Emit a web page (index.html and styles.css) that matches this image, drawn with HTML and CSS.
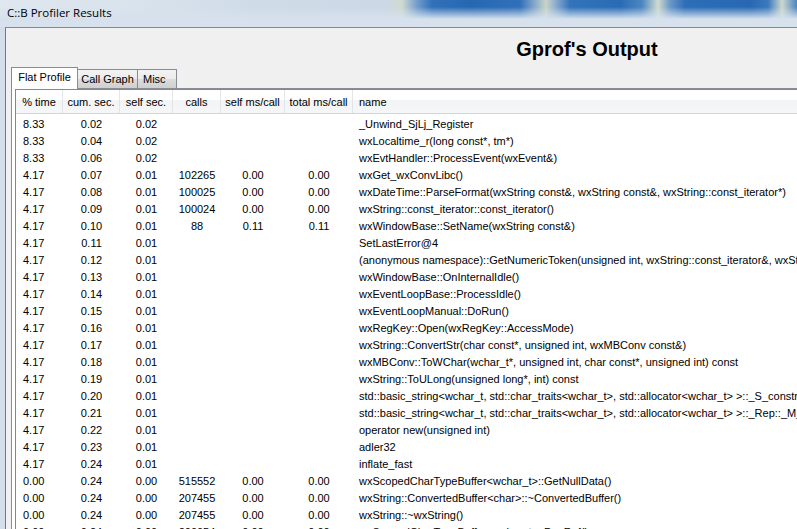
FILE: index.html
```html
<!DOCTYPE html>
<html>
<head>
<meta charset="utf-8">
<title>C::B Profiler Results</title>
<link rel="stylesheet" href="styles.css">
</head>
<body>
<div class="window">
  <div class="titlebar"><span class="caption">C::B Profiler Results</span></div>
  <div class="frame">
    <div class="client">
      <h1 class="heading">Gprof's Output</h1>
      <div class="notebook">
        <div class="tabs">
          <div class="tab active tab-flat">Flat Profile</div>
          <div class="tab tab-call">Call Graph</div>
          <div class="tab tab-misc">Misc</div>
        </div>
        <div class="page">
          <div class="list">
            <div class="header">
              <div class="hcell">% time</div>
              <div class="hcell">cum. sec.</div>
              <div class="hcell">self sec.</div>
              <div class="hcell">calls</div>
              <div class="hcell">self ms/call</div>
              <div class="hcell">total ms/call</div>
              <div class="hcell hname">name</div>
            </div>
            <div class="rows">
              <div class="row"><span class="c1">8.33</span><span>0.02</span><span>0.02</span><span></span><span></span><span></span><span class="cn">_Unwind_SjLj_Register</span></div>
              <div class="row"><span class="c1">8.33</span><span>0.04</span><span>0.02</span><span></span><span></span><span></span><span class="cn">wxLocaltime_r(long const*, tm*)</span></div>
              <div class="row"><span class="c1">8.33</span><span>0.06</span><span>0.02</span><span></span><span></span><span></span><span class="cn">wxEvtHandler::ProcessEvent(wxEvent&amp;)</span></div>
              <div class="row"><span class="c1">4.17</span><span>0.07</span><span>0.01</span><span>102265</span><span>0.00</span><span>0.00</span><span class="cn">wxGet_wxConvLibc()</span></div>
              <div class="row"><span class="c1">4.17</span><span>0.08</span><span>0.01</span><span>100025</span><span>0.00</span><span>0.00</span><span class="cn">wxDateTime::ParseFormat(wxString const&amp;, wxString const&amp;, wxString::const_iterator*)</span></div>
              <div class="row"><span class="c1">4.17</span><span>0.09</span><span>0.01</span><span>100024</span><span>0.00</span><span>0.00</span><span class="cn">wxString::const_iterator::const_iterator()</span></div>
              <div class="row"><span class="c1">4.17</span><span>0.10</span><span>0.01</span><span>88</span><span>0.11</span><span>0.11</span><span class="cn">wxWindowBase::SetName(wxString const&amp;)</span></div>
              <div class="row"><span class="c1">4.17</span><span>0.11</span><span>0.01</span><span></span><span></span><span></span><span class="cn">SetLastError@4</span></div>
              <div class="row"><span class="c1">4.17</span><span>0.12</span><span>0.01</span><span></span><span></span><span></span><span class="cn">(anonymous namespace)::GetNumericToken(unsigned int, wxString::const_iterator&amp;, wxString::const_iterator const&amp;, unsigned long*)</span></div>
              <div class="row"><span class="c1">4.17</span><span>0.13</span><span>0.01</span><span></span><span></span><span></span><span class="cn">wxWindowBase::OnInternalIdle()</span></div>
              <div class="row"><span class="c1">4.17</span><span>0.14</span><span>0.01</span><span></span><span></span><span></span><span class="cn">wxEventLoopBase::ProcessIdle()</span></div>
              <div class="row"><span class="c1">4.17</span><span>0.15</span><span>0.01</span><span></span><span></span><span></span><span class="cn">wxEventLoopManual::DoRun()</span></div>
              <div class="row"><span class="c1">4.17</span><span>0.16</span><span>0.01</span><span></span><span></span><span></span><span class="cn">wxRegKey::Open(wxRegKey::AccessMode)</span></div>
              <div class="row"><span class="c1">4.17</span><span>0.17</span><span>0.01</span><span></span><span></span><span></span><span class="cn">wxString::ConvertStr(char const*, unsigned int, wxMBConv const&amp;)</span></div>
              <div class="row"><span class="c1">4.17</span><span>0.18</span><span>0.01</span><span></span><span></span><span></span><span class="cn">wxMBConv::ToWChar(wchar_t*, unsigned int, char const*, unsigned int) const</span></div>
              <div class="row"><span class="c1">4.17</span><span>0.19</span><span>0.01</span><span></span><span></span><span></span><span class="cn">wxString::ToULong(unsigned long*, int) const</span></div>
              <div class="row"><span class="c1">4.17</span><span>0.20</span><span>0.01</span><span></span><span></span><span></span><span class="cn">std::basic_string&lt;wchar_t, std::char_traits&lt;wchar_t&gt;, std::allocator&lt;wchar_t&gt; &gt;::_S_construct(unsigned int, wchar_t, std::allocator&lt;wchar_t&gt; const&amp;)</span></div>
              <div class="row"><span class="c1">4.17</span><span>0.21</span><span>0.01</span><span></span><span></span><span></span><span class="cn">std::basic_string&lt;wchar_t, std::char_traits&lt;wchar_t&gt;, std::allocator&lt;wchar_t&gt; &gt;::_Rep::_M_dispose(std::allocator&lt;wchar_t&gt; const&amp;)</span></div>
              <div class="row"><span class="c1">4.17</span><span>0.22</span><span>0.01</span><span></span><span></span><span></span><span class="cn">operator new(unsigned int)</span></div>
              <div class="row"><span class="c1">4.17</span><span>0.23</span><span>0.01</span><span></span><span></span><span></span><span class="cn">adler32</span></div>
              <div class="row"><span class="c1">4.17</span><span>0.24</span><span>0.01</span><span></span><span></span><span></span><span class="cn">inflate_fast</span></div>
              <div class="row"><span class="c1">0.00</span><span>0.24</span><span>0.00</span><span>515552</span><span>0.00</span><span>0.00</span><span class="cn">wxScopedCharTypeBuffer&lt;wchar_t&gt;::GetNullData()</span></div>
              <div class="row"><span class="c1">0.00</span><span>0.24</span><span>0.00</span><span>207455</span><span>0.00</span><span>0.00</span><span class="cn">wxString::ConvertedBuffer&lt;char&gt;::~ConvertedBuffer()</span></div>
              <div class="row"><span class="c1">0.00</span><span>0.24</span><span>0.00</span><span>207455</span><span>0.00</span><span>0.00</span><span class="cn">wxString::~wxString()</span></div>
              <div class="row"><span class="c1">0.00</span><span>0.24</span><span>0.00</span><span>200054</span><span>0.00</span><span>0.00</span><span class="cn">wxScopedCharTypeBuffer&lt;wchar_t&gt;::DecRef()</span></div>
            </div>
          </div>
        </div>
      </div>
    </div>
  </div>
</div>
</body>
</html>
```

FILE: styles.css
```css
* {
  box-sizing: border-box;
}

html,
body {
  margin: 0;
  padding: 0;
}

body {
  width: 797px;
  height: 529px;
  overflow: hidden;
  background: #d3deea;
  font-family: "Liberation Sans", Arial, sans-serif;
  font-size: 11px;
  color: #000;
}

.window {
  width: 1170px;
}

.titlebar {
  height: 27px;
  padding-left: 7px;
  background:
    linear-gradient(to bottom, rgba(214, 225, 237, 0) 7px, rgba(214, 225, 237, 1) 19px, #d8e2ed 27px),
    linear-gradient(to right, #dfe7ef 0, #d9e3ec 130px, #cfdbe7 260px, #cbd8e6 385px, #cfd9d0 402px, #6d9acb 418px, #3271b9 432px, #2767b2 470px, #3170b9 520px, #8eaecb 536px, #c9d4c6 546px, #8aabce 556px, #3373bb 570px, #2b6bb5 620px, #4c86c2 642px, #d0dacf 658px, #6b98c8 670px, #2e6eb7 685px, #2868b3 750px, #3b79bd 768px, #ccd7ce 782px, #4b85c1 797px, #2e6eb7 900px);
}

.caption {
  font-family: "Open Sans", "Liberation Sans", sans-serif;
  font-size: 11.5px;
  line-height: 26px;
  color: #000;
}

.frame {
  display: flex;
  padding-left: 5px;
  background: #d3deea;
}

.client {
  width: 1163px;
  height: 502px;
  border-left: 1px solid #6e7b88;
  border-top: 1px solid #7f8a96;
  background: #f0f0f0;
}

.heading {
  margin: 0;
  height: 39px;
  padding-top: 3px;
  line-height: 36px;
  text-align: center;
  font-family: "Liberation Sans", Arial, sans-serif;
  font-weight: bold;
  font-size: 20px;
}

.notebook {
  margin-left: 5px;
}

.tabs {
  display: flex;
  align-items: flex-end;
  height: 21px;
}

.tab {
  height: 19px;
  border: 1px solid #898c95;
  border-bottom: 0;
  line-height: 18px;
  text-align: center;
  margin-left: -1px;
  font-size: 11px;
  background: linear-gradient(to bottom, #f3f3f3 0, #ebebeb 50%, #dddddd 50%, #cfcfcf 100%);
}

.tab.active {
  height: 22px;
  margin-left: 0;
  margin-bottom: -1px;
  background: #fff;
  position: relative;
  z-index: 1;
}

.tab-flat {
  width: 67px;
}

.tab-call {
  width: 61px;
}

.tab-misc {
  width: 40px;
  text-align: left;
  padding-left: 5px;
}

.page {
  border-top: 1px solid #898c95;
  border-left: 1px solid #898c95;
  padding-left: 3px;
  background: #fff;
  height: 450px;
}

.list {
  border-top: 1px solid #828790;
  border-left: 1px solid #828790;
  background: #fff;
  height: 450px;
}

.header,
.row {
  display: grid;
  grid-template-columns: 47px 57px 53px 48px 64px 68px 1fr;
}

.header {
  height: 24px;
  border-bottom: 1px solid #d5d5d5;
  background: linear-gradient(to bottom, #ffffff 0, #ffffff 10px, #f3f4f6 10px, #f5f6f8 100%);
}

.hcell {
  padding-top: 2px;
  line-height: 21px;
  text-align: center;
  border-right: 1px solid #e3e4e6;
  white-space: nowrap;
}

.hcell.hname {
  text-align: left;
  padding-left: 6px;
  border-right: 0;
}

.rows {
  padding-top: 2px;
}

.row {
  height: 17px;
  line-height: 17px;
  white-space: nowrap;
}

.row span {
  text-align: center;
}

.row .c1 {
  text-align: left;
  padding-left: 7px;
}

.row .cn {
  text-align: left;
  padding-left: 6px;
  overflow: hidden;
}
```
